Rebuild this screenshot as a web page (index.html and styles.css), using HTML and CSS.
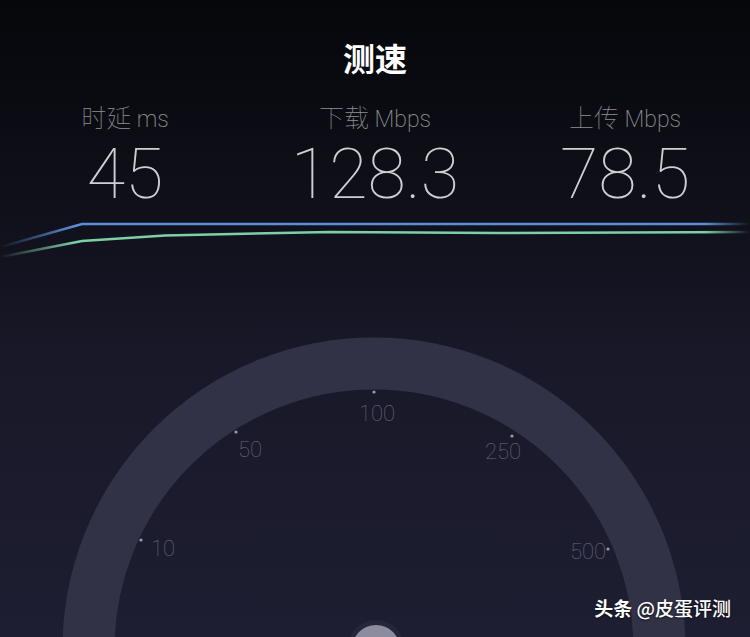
FILE: index.html
```html
<!DOCTYPE html>
<html lang="zh">
<head>
    <meta charset="UTF-8">
    <title>测速</title>
    <link rel="stylesheet" href="styles.css">
</head>
<body>
<div class="screen">

    <!-- 标题 -->
    <div class="title">测速</div>

    <!-- 三项数据 -->
    <div class="stats">
        <div class="stat">
            <div class="stat-label">时延 <span class="unit">ms</span></div>
            <div class="stat-value">45</div>
        </div>
        <div class="stat">
            <div class="stat-label">下载 <span class="unit">Mbps</span></div>
            <div class="stat-value">128.3</div>
        </div>
        <div class="stat">
            <div class="stat-label">上传 <span class="unit">Mbps</span></div>
            <div class="stat-value">78.5</div>
        </div>
    </div>

    <!-- 速度曲线 -->
    <svg class="chart" width="750" height="70" viewBox="0 200 750 70">
        <defs>
            <linearGradient id="fadeBlue" gradientUnits="userSpaceOnUse" x1="0" y1="0" x2="750" y2="0">
                <stop offset="0" stop-color="#5b8ed8" stop-opacity="0"/>
                <stop offset="0.1" stop-color="#5b8ed8" stop-opacity="1"/>
                <stop offset="0.94" stop-color="#5b8ed8" stop-opacity="1"/>
                <stop offset="1" stop-color="#5b8ed8" stop-opacity="0"/>
            </linearGradient>
            <linearGradient id="fadeGreen" gradientUnits="userSpaceOnUse" x1="0" y1="0" x2="750" y2="0">
                <stop offset="0" stop-color="#7ccfa6" stop-opacity="0"/>
                <stop offset="0.1" stop-color="#7ccfa6" stop-opacity="1"/>
                <stop offset="0.94" stop-color="#7ccfa6" stop-opacity="1"/>
                <stop offset="1" stop-color="#7ccfa6" stop-opacity="0"/>
            </linearGradient>
        </defs>
        <path d="M0 247 L82 224 L750 224" stroke="url(#fadeBlue)"/>
        <path d="M0 257 L82 241 L165 235.5 L330 232 L500 233 L750 232" stroke="url(#fadeGreen)"/>
    </svg>

    <!-- 仪表盘 -->
    <svg class="gauge" width="750" height="367" viewBox="0 270 750 367">
        <circle class="ring" cx="374" cy="649" r="285.5"/>
        <g class="ticks">
            <circle cx="141" cy="540" r="1.6"/>
            <circle cx="236" cy="432" r="1.6"/>
            <circle cx="374" cy="392" r="1.6"/>
            <circle cx="512" cy="436" r="1.6"/>
            <circle cx="608" cy="549" r="1.6"/>
        </g>
        <g class="scale">
            <text x="163" y="556">10</text>
            <text x="250" y="457">50</text>
            <text x="377" y="421">100</text>
            <text x="503" y="459">250</text>
            <text x="588" y="559">500</text>
        </g>
        <circle class="hub-shadow" cx="376" cy="649" r="29"/>
        <circle class="hub" cx="376" cy="649" r="24"/>
    </svg>

    <div class="watermark"><b>头条</b> @皮蛋评测</div>
</div>
</body>
</html>
```

FILE: styles.css
```css
body {
    margin: 0;
    background-color: #07080c;
}

.screen {
    width: 750px;
    height: 637px;
    position: relative;
    overflow: hidden;
    background: linear-gradient(to bottom, #06070b 0%, #0e0f18 30%, #181828 55%, #1e1e32 100%);
    font-family: Roboto, "Noto Sans CJK SC", sans-serif;
}

.title {
    padding-top: 36px;
    height: 42px;
    line-height: 42px;
    text-align: center;
    font-family: "Noto Sans CJK SC", sans-serif;
    font-size: 32px;
    font-weight: 700;
    color: #ffffff;
}

.stats {
    display: grid;
    grid-template-columns: 250px 250px 250px;
    height: 99px;
    padding-top: 23px;
}

.stat {
    text-align: center;
}

.stat-label {
    height: 30px;
    line-height: 30px;
    font-family: "Noto Sans CJK SC", sans-serif;
    font-size: 25px;
    font-weight: 100;
    color: #8e8e92;
}

.stat-label .unit {
    font-family: Roboto, sans-serif;
    font-size: 23px;
    font-weight: 200;
}

.stat-value {
    margin-top: 8px;
    height: 61px;
    line-height: 70px;
    font-size: 70px;
    font-weight: 100;
    color: #cfcfd3;
}

.chart,
.gauge {
    display: block;
}

.chart path {
    fill: none;
    stroke-width: 2.5;
}

.gauge .ring {
    fill: none;
    stroke: #323247;
    stroke-width: 52;
}

.gauge .ticks circle {
    fill: #9a9aae;
}

.gauge .scale text {
    font-family: Roboto, sans-serif;
    font-size: 22px;
    font-weight: 100;
    fill: #6a6a80;
    text-anchor: middle;
}

.gauge .hub-shadow {
    fill: #26263a;
}

.gauge .hub {
    fill: #8c8c9e;
}

.watermark {
    position: absolute;
    right: 19px;
    bottom: 16px;
    font-family: "Noto Sans CJK SC", sans-serif;
    font-size: 19px;
    font-weight: 500;
    color: #ffffff;
    text-shadow: 0 1px 2px rgba(0, 0, 0, 0.7);
}

.watermark b {
    font-weight: 700;
}
```
